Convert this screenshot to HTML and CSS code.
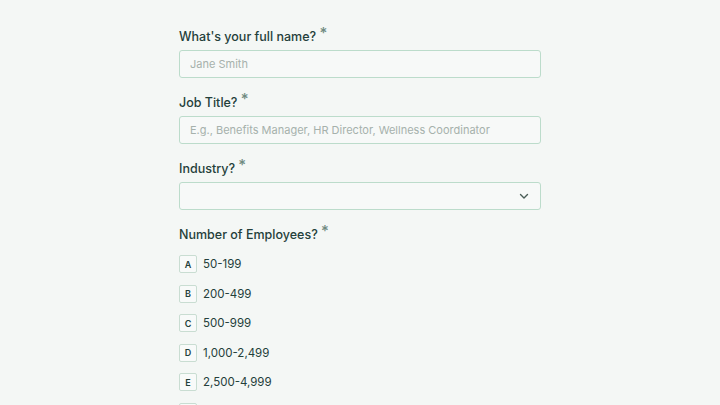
FILE: index.html
```html
<!DOCTYPE html>
<html lang="en">
<head>
    <meta charset="UTF-8">
    <meta name="viewport" content="width=device-width, initial-scale=1.0">
    <title>Benefits Survey</title>
    <link rel="stylesheet" href="styles.css">
</head>
<body>
    <form class="form">
        <div class="field">
            <label class="label" for="name">What's your full name? <span class="req">*</span></label>
            <input class="input" id="name" type="text" placeholder="Jane Smith">
        </div>

        <div class="field">
            <label class="label" for="title">Job Title? <span class="req">*</span></label>
            <input class="input" id="title" type="text" placeholder="E.g., Benefits Manager, HR Director, Wellness Coordinator">
        </div>

        <div class="field">
            <label class="label" for="industry">Industry? <span class="req">*</span></label>
            <div class="select">
                <svg class="chevron" width="12" height="12" viewBox="0 0 12 12"><path d="M2.5 4.5 6 8l3.5-3.5" fill="none" stroke="#4a5d57" stroke-width="1.4" stroke-linecap="round" stroke-linejoin="round"/></svg>
            </div>
        </div>

        <div class="field">
            <div class="label">Number of Employees? <span class="req">*</span></div>
            <ul class="options">
                <li class="option"><span class="key">A</span>50-199</li>
                <li class="option"><span class="key">B</span>200-499</li>
                <li class="option"><span class="key">C</span>500-999</li>
                <li class="option"><span class="key">D</span>1,000-2,499</li>
                <li class="option"><span class="key">E</span>2,500-4,999</li>
                <li class="option"><span class="key">F</span>5,000+</li>
            </ul>
        </div>
    </form>
</body>
</html>
```

FILE: styles.css
```css
body {
    margin: 0;
    padding-top: 27px;
    background-color: #f4f7f5;
    font-family: Inter, 'Noto Sans', sans-serif;
    color: #24403a;
}
.form {
    width: 362px;
    margin: 0 auto;
}
.field {
    margin-bottom: 15px;
}
.label {
    display: block;
    font-size: 12.5px;
    font-weight: 500;
    line-height: 18px;
    margin-bottom: 4px;
}
.req {
    color: #6f8a80;
    font-size: 15px;
    position: relative;
    top: -3px;
}
.input,
.select {
    display: block;
    box-sizing: border-box;
    width: 100%;
    height: 28px;
    padding: 0 10px;
    border: 1px solid #bcdccb;
    border-radius: 3px;
    background-color: #f7f9f8;
    font-family: inherit;
    font-size: 11px;
    color: #24403a;
    outline: none;
}
.input::placeholder {
    color: #a6b1ac;
}
.select {
    display: flex;
    align-items: center;
    justify-content: flex-end;
}
.options {
    list-style: none;
    margin: 11px 0 0;
    padding: 0;
}
.option {
    display: flex;
    align-items: center;
    height: 18px;
    margin-bottom: 11.6px;
    font-size: 11.5px;
}
.key {
    display: inline-flex;
    align-items: center;
    justify-content: center;
    box-sizing: border-box;
    width: 18px;
    height: 18px;
    margin-right: 6px;
    border: 1px solid #c9ddd2;
    border-radius: 2px;
    background-color: #f8faf9;
    font-size: 9px;
    font-weight: 600;
    color: #24403a;
}
```
